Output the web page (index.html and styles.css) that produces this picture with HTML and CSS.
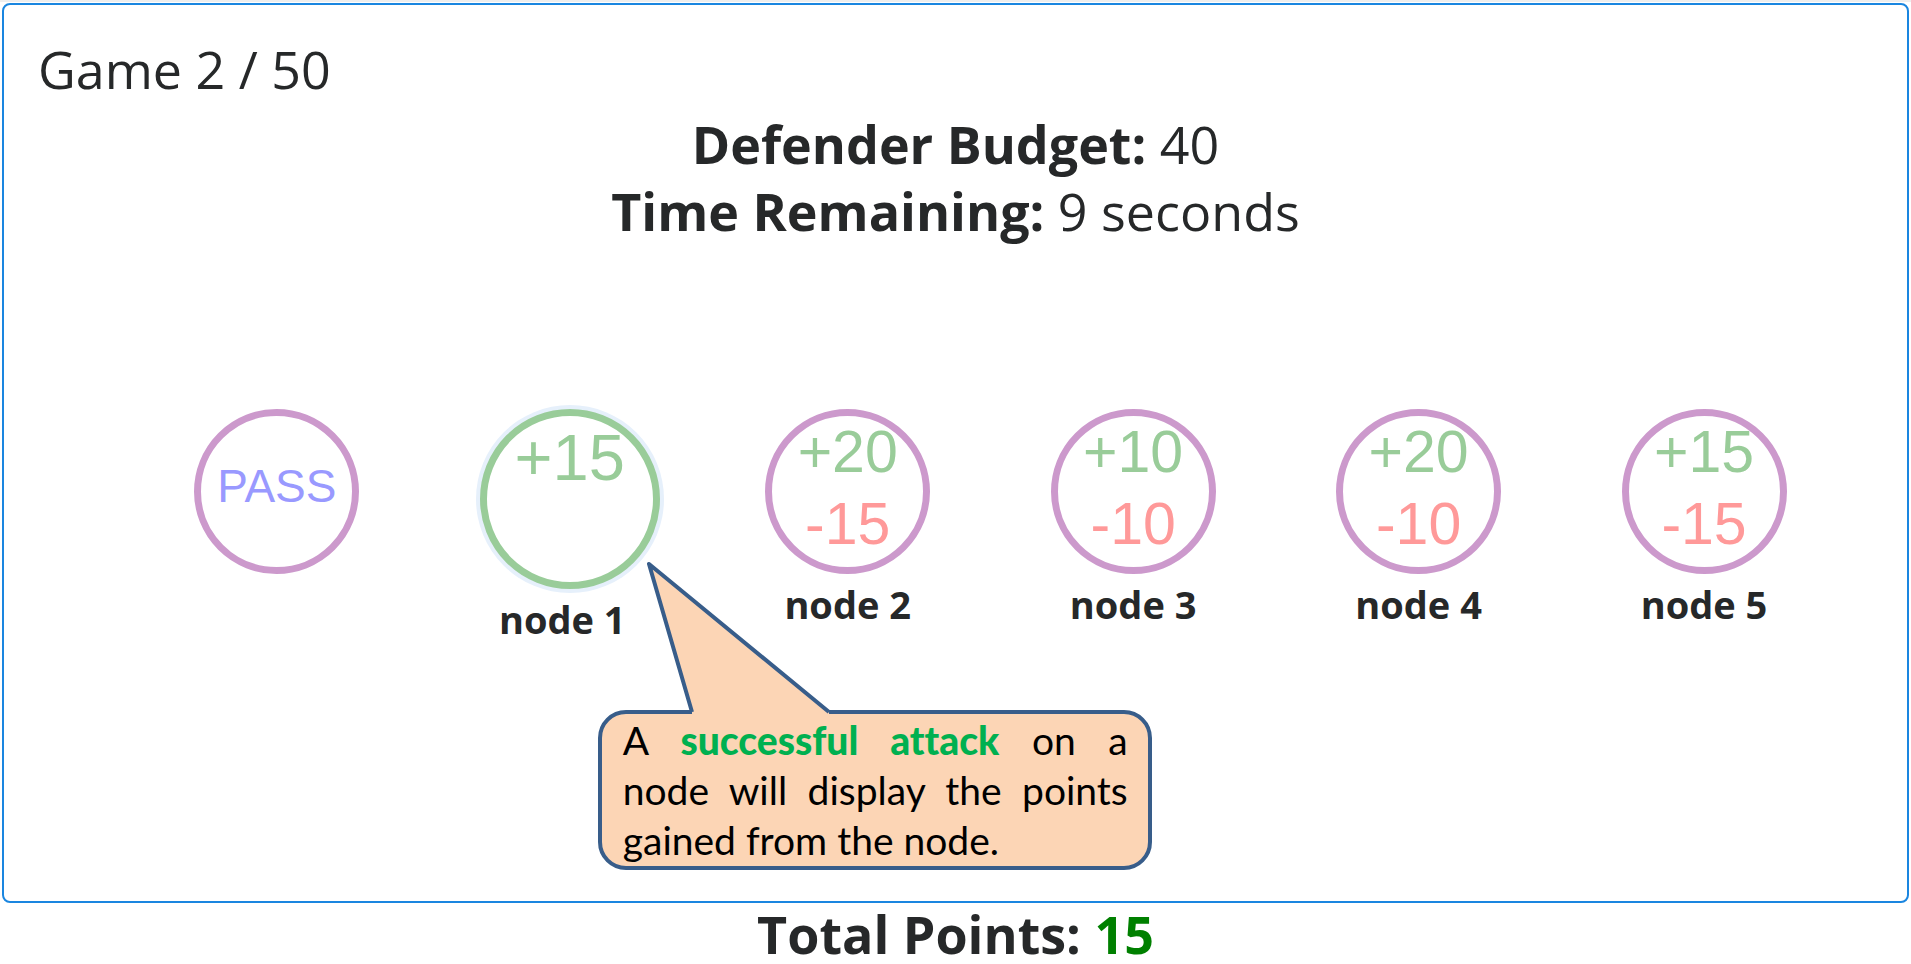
FILE: index.html
```html
<!DOCTYPE html>
<html lang="en">
<head>
<meta charset="utf-8">
<title>Game 2 / 50</title>
<link rel="stylesheet" href="styles.css">
</head>
<body>
<main class="card">
  <p class="round">Game 2 / 50</p>
  <section class="status">
    <p><strong>Defender Budget:</strong> 40</p>
    <p><strong>Time Remaining:</strong> 9 seconds</p>
  </section>
  <section class="nodes">
    <div class="node">
      <button class="circle circle-pass" type="button">PASS</button>
    </div>
    <div class="node node-hit">
      <button class="circle" id="n1" type="button"><span class="gain">+15</span></button>
      <label class="name" for="n1">node 1</label>
      <div class="callout">
        <svg class="tail" viewBox="0 0 186 152" aria-hidden="true">
          <path d="M45 152V150L2 2L182 150V152Z" fill="#fcd5b5"/>
          <path d="M45 150L2 2L182 150" fill="none" stroke="#385d8a" stroke-width="4" stroke-linejoin="round"/>
        </svg>
        <p>A <strong>successful attack</strong> on a node will display the points gained from the node.</p>
      </div>
    </div>
    <div class="node">
      <button class="circle" id="n2" type="button"><span class="gain">+20</span><span class="loss">-15</span></button>
      <label class="name" for="n2">node 2</label>
    </div>
    <div class="node">
      <button class="circle" id="n3" type="button"><span class="gain">+10</span><span class="loss">-10</span></button>
      <label class="name" for="n3">node 3</label>
    </div>
    <div class="node">
      <button class="circle" id="n4" type="button"><span class="gain">+20</span><span class="loss">-10</span></button>
      <label class="name" for="n4">node 4</label>
    </div>
    <div class="node">
      <button class="circle" id="n5" type="button"><span class="gain">+15</span><span class="loss">-15</span></button>
      <label class="name" for="n5">node 5</label>
    </div>
  </section>
</main>
<footer class="total">Total Points: <span class="score">15</span></footer>
</body>
</html>
```
FILE: styles.css
```css
* {
  box-sizing: border-box;
}

body {
  margin: 0;
  min-height: 100vh;
  display: flex;
  flex-direction: column;
  border-top: 2px solid #eeeeee;
  background: #ffffff;
  color: #262829;
  font-family: "Open Sans", "Noto Sans", sans-serif;
  font-size: 52px;
  line-height: 67px;
}

p {
  margin: 0;
}

.card {
  flex: 1;
  margin: 1px 2px 0;
  padding-top: 30px;
  border: 2px solid #1a86e0;
  border-radius: 8px;
}

.round {
  padding-left: 34px;
}

.status {
  margin-top: 8px;
  text-align: center;
}

.nodes {
  display: grid;
  grid-template-columns: repeat(6, 1fr);
  margin-top: 165px;
  padding-left: 10%;
}

.node {
  position: relative;
  width: 165px;
  display: flex;
  flex-direction: column;
  align-items: center;
}

.circle {
  display: flex;
  flex-direction: column;
  flex-shrink: 0;
  align-items: center;
  width: 165px;
  height: 165px;
  padding: 0;
  border: 7px solid #cc99cc;
  border-radius: 50%;
  background: #ffffff;
  font-family: "Liberation Sans", Arial, sans-serif;
  font-size: 59px;
  line-height: 72px;
}

.circle-pass {
  justify-content: center;
  padding-bottom: 12px;
  color: #9999ff;
  font-size: 46px;
}

.gain {
  color: #99cc99;
}

.loss {
  color: #ff9999;
}

.name {
  width: 165px;
  margin-top: 3px;
  font-size: 38px;
  line-height: 54px;
  font-weight: 700;
  text-align: center;
}

.node-hit {
  align-items: flex-start;
}

.node-hit .circle {
  width: 180px;
  height: 180px;
  padding-top: 6px;
  border-color: #99cc99;
  box-shadow: 0 0 0 4px #e6f0fb;
  font-size: 65px;
}

.callout {
  position: absolute;
  top: 301px;
  left: 118px;
  width: 554px;
  padding: 1px 20px 1px 21px;
  border: 4px solid #385d8a;
  border-radius: 28px;
  background: #fcd5b5;
  color: #000000;
  font-family: Lato, sans-serif;
  font-size: 39px;
  font-variant-ligatures: none;
  line-height: 50px;
  text-align: justify;
}

.callout strong {
  color: #00b050;
  font-weight: 900;
}

.tail {
  position: absolute;
  left: 45px;
  bottom: 100%;
  width: 186px;
  height: 152px;
}

.total {
  font-weight: 700;
  line-height: 61px;
  text-align: center;
}

.score {
  color: #008000;
}
```
